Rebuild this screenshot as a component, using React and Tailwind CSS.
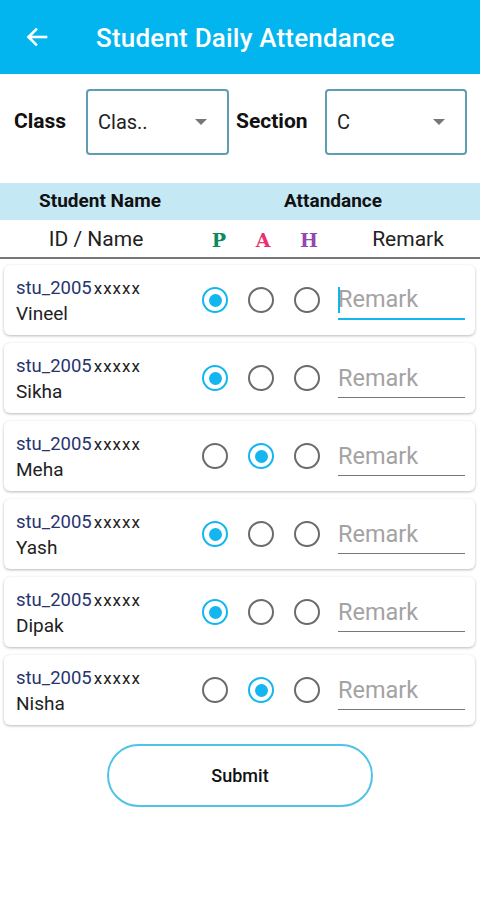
import { useState } from 'react';

const students = [
  { name: 'Vineel', status: 'P', focused: true },
  { name: 'Sikha', status: 'P' },
  { name: 'Meha', status: 'A' },
  { name: 'Yash', status: 'P' },
  { name: 'Dipak', status: 'P' },
  { name: 'Nisha', status: 'A' },
];

function Radio({ checked, onClick }) {
  return (
    <button
      onClick={onClick}
      className={`w-[26px] h-[26px] rounded-full flex items-center justify-center shrink-0 border-[2.5px] ${
        checked ? 'border-[#13b6ef]' : 'border-[#6b6b6b]'
      }`}
    >
      {checked && <span className="w-[13px] h-[13px] rounded-full bg-[#13b6ef]" />}
    </button>
  );
}

function Dropdown({ value, width }) {
  return (
    <div
      className={`${width} h-[66px] border-2 border-[#5e9db2] rounded-[4px] flex items-center justify-between pl-[10px] pr-[20px]`}
    >
      <span className="text-[20px] text-[#222]">{value}</span>
      <span className="w-0 h-0 border-l-[6px] border-r-[6px] border-t-[6px] border-l-transparent border-r-transparent border-t-[#777]" />
    </div>
  );
}

export default function App() {
  const [rows, setRows] = useState(students);

  const setStatus = (i, s) => {
    setRows(rows.map((r, j) => (j === i ? { ...r, status: s } : r)));
  };

  return (
    <div className="w-[480px] h-[900px] bg-white font-['Roboto',sans-serif]">
      {/* App bar */}
      <header className="h-[74px] bg-[#03b5ef] flex items-center">
        <svg className="ml-[25px]" width="24" height="24" viewBox="0 0 24 24" fill="none" stroke="white" strokeWidth="2.6" strokeLinecap="square">
          <path d="M21 12H4" />
          <path d="M11 4.5L3.5 12l7.5 7.5" />
        </svg>
        <h1 className="ml-[47px] text-white text-[26px] font-medium tracking-[0.2px] mt-[2px]">Student Daily Attendance</h1>
      </header>

      {/* Class / Section */}
      <div className="flex items-center mt-[15px] h-[66px]">
        <span className="ml-[14px] w-[72px] text-[21px] font-bold text-[#111]">Class</span>
        <Dropdown value="Clas.." width="w-[143px]" />
        <span className="ml-[7px] w-[89px] text-[21px] font-bold text-[#111]">Section</span>
        <Dropdown value="C" width="w-[142px]" />
      </div>

      {/* Table header */}
      <div className="mt-[28px] h-[37px] bg-[#c5e8f5] flex items-center text-[19px] font-bold text-[#111]">
        <div className="w-[200px] text-center">Student Name</div>
        <div className="w-[266px] text-center">Attandance</div>
      </div>
      <div className="h-[39px] flex items-center pt-[3px] border-b-2 border-[#777] text-[21px] text-[#222]">
        <div className="w-[192px] text-center">ID / Name</div>
        <div className="w-[30px] ml-[12px] text-center font-['DejaVu_Serif',serif] font-bold text-[19px] text-[#0b8a5e]">P</div>
        <div className="w-[30px] ml-[14px] text-center font-['DejaVu_Serif',serif] font-bold text-[19px] text-[#ec2f6e]">A</div>
        <div className="w-[30px] ml-[16px] text-center font-['DejaVu_Serif',serif] font-bold text-[19px] text-[#9447b3]">H</div>
        <div className="flex-1 pl-[12px] text-center">Remark</div>
      </div>

      {/* Rows */}
      <div className="flex flex-col gap-[8px] mt-[6px] pl-[4px] pr-[5px]">
        {rows.map((s, i) => (
          <div
            key={i}
            className="h-[70px] bg-white rounded-[6px] shadow-[0_1px_3px_rgba(0,0,0,0.28)] flex items-center pl-[12px]"
          >
            <div className="w-[186px] flex flex-col mt-[2px]">
              <div className="flex items-baseline leading-[25px]">
                <span className="text-[18.5px] text-[#27346f]">stu_2005</span>
                <span className="text-[17px] text-[#222] ml-[2px] tracking-[1px]">xxxxx</span>
              </div>
              <span className="text-[19px] text-[#222] leading-[25px]">{s.name}</span>
            </div>
            <div className="flex gap-[20px]">
              <Radio checked={s.status === 'P'} onClick={() => setStatus(i, 'P')} />
              <Radio checked={s.status === 'A'} onClick={() => setStatus(i, 'A')} />
              <Radio checked={s.status === 'H'} onClick={() => setStatus(i, 'H')} />
            </div>
            <div
              className={`ml-[18px] w-[127px] h-[38px] mt-[2px] flex items-center ${
                s.focused ? 'border-b-2 border-[#13b6ef]' : 'border-b border-[#777]'
              }`}
            >
              {s.focused && <span className="w-[2px] h-[26px] bg-[#13b6ef] mr-[-2px]" />}
              <input
                placeholder="Remark"
                className="w-full text-[23.5px] text-[#333] placeholder:text-[#a3a3a3] outline-none bg-transparent"
              />
            </div>
          </div>
        ))}
      </div>

      {/* Submit */}
      <div className="flex justify-center mt-[19px]">
        <button className="w-[266px] h-[63px] rounded-full border-2 border-[#4fc3e8] text-[18px] font-medium text-[#111]">
          Submit
        </button>
      </div>
    </div>
  );
}
